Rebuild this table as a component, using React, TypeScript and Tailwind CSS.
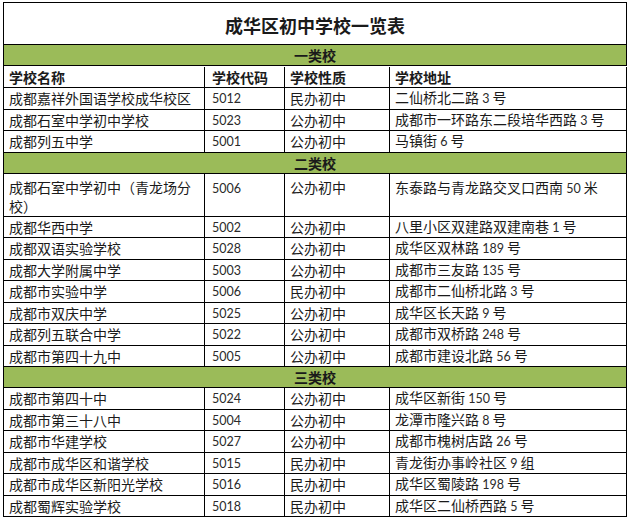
import React from 'react';

type School = {
  name: string;
  code: string;
  kind: string;
  addr: string;
};

// 一类校
const tier1: School[] = [
  { name: '成都嘉祥外国语学校成华校区', code: '5012', kind: '民办初中', addr: '二仙桥北二路 3 号' },
  { name: '成都石室中学初中学校', code: '5023', kind: '公办初中', addr: '成都市一环路东二段培华西路 3 号' },
  { name: '成都列五中学', code: '5001', kind: '公办初中', addr: '马镇街 6 号' },
];

// 二类校（第一行是两行高的，单独写）
const tier2: School[] = [
  { name: '成都华西中学', code: '5002', kind: '公办初中', addr: '八里小区双建路双建南巷 1 号' },
  { name: '成都双语实验学校', code: '5028', kind: '公办初中', addr: '成华区双林路 189 号' },
  { name: '成都大学附属中学', code: '5003', kind: '公办初中', addr: '成都市三友路 135 号' },
  { name: '成都市实验中学', code: '5006', kind: '民办初中', addr: '成都市二仙桥北路 3 号' },
  { name: '成都市双庆中学', code: '5025', kind: '公办初中', addr: '成华区长天路 9 号' },
  { name: '成都列五联合中学', code: '5022', kind: '公办初中', addr: '成都市双桥路 248 号' },
  { name: '成都市第四十九中', code: '5005', kind: '公办初中', addr: '成都市建设北路 56 号' },
];

// 三类校
const tier3: School[] = [
  { name: '成都市第四十中', code: '5024', kind: '公办初中', addr: '成华区新街 150 号' },
  { name: '成都市第三十八中', code: '5004', kind: '公办初中', addr: '龙潭市隆兴路 8 号' },
  { name: '成都市华建学校', code: '5027', kind: '公办初中', addr: '成都市槐树店路 26 号' },
  { name: '成都市成华区和谐学校', code: '5015', kind: '民办初中', addr: '青龙街办事岭社区 9 组' },
  { name: '成都市成华区新阳光学校', code: '5016', kind: '民办初中', addr: '成华区蜀陵路 198 号' },
  { name: '成都蜀辉实验学校', code: '5018', kind: '民办初中', addr: '成华区二仙桥西路 5 号' },
];

// 数字用另一种字体（原表是 Calibri）
const Mixed: React.FC<{ text: string }> = ({ text }) => (
  <span>
    {text.split(/(\d+)/).map((part, i) =>
      /^\d+$/.test(part) ? (
        <span key={i} className="font-['Lato',sans-serif] text-[12.5px] text-[#2a2a2a]">
          {part}
        </span>
      ) : (
        part
      )
    )}
  </span>
);

const rowGrid = 'grid grid-cols-[201px_80px_105px_237px] border-b border-black';
const cell = 'flex items-center border-r border-black pl-[5px] whitespace-pre overflow-hidden';
const tallCell = 'border-r border-black pl-[5px] pt-[4px] leading-[19px] whitespace-pre';

const SchoolRow: React.FC<{ s: School }> = ({ s }) => (
  <div className={`${rowGrid} h-[21.5px]`}>
    <div className={cell}>{s.name}</div>
    <div className={`${cell} pl-[7px]`}>
      <Mixed text={s.code} />
    </div>
    <div className={cell}>{s.kind}</div>
    <div className={cell}>
      <Mixed text={s.addr} />
    </div>
  </div>
);

const TierRow: React.FC<{ label: string }> = ({ label }) => (
  <div className="flex h-[21px] items-center justify-center border-b border-r border-black bg-[#9bbb59] font-bold">
    {label}
  </div>
);

export default function App() {
  return (
    <div className="min-h-[521px] bg-white pl-[3px] pt-[2px] font-['Noto_Sans_CJK_SC',sans-serif] text-[14px] leading-[18px] text-[#1a1a1a]">
      <div className="w-[624px] border-l border-t border-black">
        {/* 标题 */}
        <div className="flex h-[42px] items-center justify-center border-b border-r border-black pt-[3px] text-[18px] font-bold">
          成华区初中学校一览表
        </div>

        <div className="h-[22px]">
          <TierRow label="一类校" />
        </div>

        {/* 表头 */}
        <div className={`${rowGrid} h-[21px] font-bold`}>
          <div className={cell}>学校名称</div>
          <div className={`${cell} pl-[7px]`}>学校代码</div>
          <div className={cell}>学校性质</div>
          <div className={cell}>学校地址</div>
        </div>

        {tier1.map((s) => (
          <SchoolRow key={s.name} s={s} />
        ))}

        <TierRow label="二类校" />

        <div className={`${rowGrid} h-[43px]`}>
          <div className={tallCell}>
            成都石室中学初中（青龙场分
            <br />
            校）
          </div>
          <div className={`${tallCell} pl-[7px]`}>
            <Mixed text="5006" />
          </div>
          <div className={tallCell}>公办初中</div>
          <div className={tallCell}>
            <Mixed text="东泰路与青龙路交叉口西南 50 米" />
          </div>
        </div>

        {tier2.map((s) => (
          <SchoolRow key={s.name} s={s} />
        ))}

        <TierRow label="三类校" />

        {tier3.map((s) => (
          <SchoolRow key={s.name} s={s} />
        ))}
      </div>
    </div>
  );
}
